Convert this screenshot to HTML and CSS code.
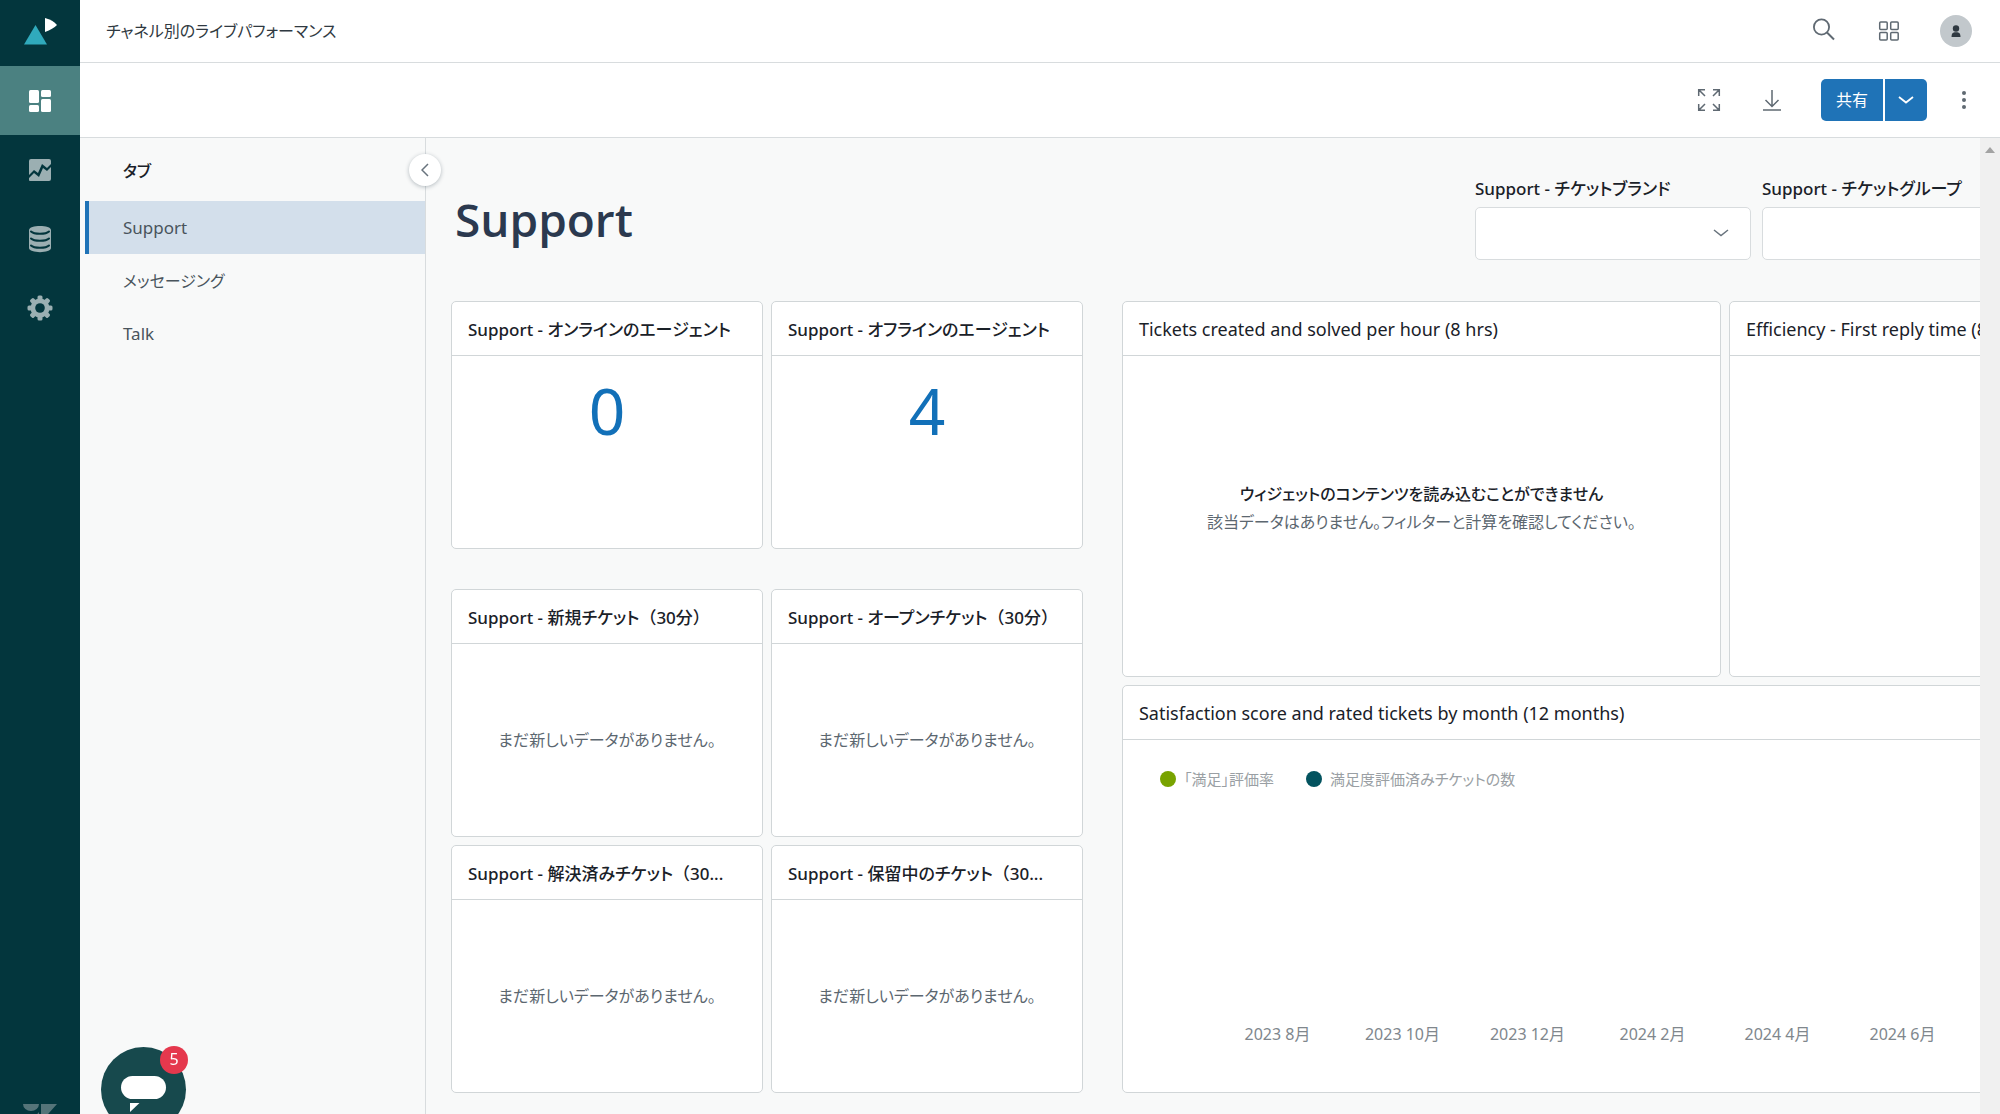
FILE: index.html
```html
<!DOCTYPE html>
<html lang="ja">
<head>
<meta charset="utf-8">
<meta name="viewport" content="width=device-width, initial-scale=1">
<title>チャネル別のライブパフォーマンス</title>
<link rel="stylesheet" href="styles.css">
</head>
<body>
<div class="app">
  <nav class="rail" aria-label="メイン">
    <a class="rail-logo" href="#" aria-label="Explore">
      <svg width="80" height="66" viewBox="0 0 80 66"><path d="M35.500 25L47 44.500H24z" fill="#30aabc"/><path d="M45 18q8 2 12 7-4 4-12 7z" fill="#fff"/></svg>
    </a>
    <a class="rail-item is-active" href="#" aria-label="ダッシュボード">
      <svg width="24" height="24" viewBox="0 0 24 24" fill="currentColor"><rect x="1" y="1" width="10" height="13" rx="1.500"/><rect x="1" y="16" width="10" height="7" rx="1.500"/><rect x="13" y="1" width="10" height="7" rx="1.500"/><rect x="13" y="10" width="10" height="13" rx="1.500"/></svg>
    </a>
    <a class="rail-item" href="#" aria-label="レポート">
      <svg width="24" height="24" viewBox="0 0 24 24" fill="currentColor"><path d="M3 1h18a2 2 0 0 1 2 2v3l-4 4-5-4-4 9-4-3-5 5V3a2 2 0 0 1 2-2z"/><path d="M1 20l5-5 5 4 4-9 4 3 4-4v12a2 2 0 0 1-2 2H2a1 1 0 0 1-1-1z"/></svg>
    </a>
    <a class="rail-item" href="#" aria-label="データセット">
      <svg width="24" height="28" viewBox="0 0 24 28"><path d="M1 5c0-5.500 22-5.500 22 0v18c0 5.500-22 5.500-22 0z" fill="currentColor"/><path d="M3 6.500c3 3 15 3 18 0M3 13.500c3 3 15 3 18 0M3 20.500c3 3 15 3 18 0" fill="none" stroke="#03363d" stroke-width="2" stroke-linecap="round"/></svg>
    </a>
    <a class="rail-item" href="#" aria-label="設定">
      <svg width="26" height="26" viewBox="0 0 26 26"><g fill="currentColor"><rect x="10.500" y="0.500" width="5" height="25" rx="1.500"/><rect x="10.500" y="0.500" width="5" height="25" rx="1.500" transform="rotate(45 13 13)"/><rect x="10.500" y="0.500" width="5" height="25" rx="1.500" transform="rotate(90 13 13)"/><rect x="10.500" y="0.500" width="5" height="25" rx="1.500" transform="rotate(135 13 13)"/><circle cx="13" cy="13" r="9.500"/></g><circle cx="13" cy="13" r="4.800" fill="#03363d"/></svg>
    </a>
    <svg class="rail-brand" width="34" height="28" viewBox="0 0 34 28" fill="currentColor"><path d="M0 0h16a8 7 0 0 1-16 0zM16 8v18H0zM18 0h16L18 18zM18 26a8 7 0 0 1 16 0z"/></svg>
  </nav>

  <div class="page">
    <header class="topbar">
      <h1 class="topbar-title">チャネル別のライブパフォーマンス</h1>
      <div class="topbar-actions">
        <button class="icon-btn" type="button" aria-label="検索"><svg width="26" height="26" viewBox="0 0 26 26" fill="none" stroke="currentColor" stroke-width="1.800"><circle cx="9.500" cy="9" r="7.600"/><path d="M15 14.500L22 21.500" stroke-width="2"/></svg></button>
        <button class="icon-btn" type="button" aria-label="製品"><svg width="22" height="22" viewBox="0 0 22 22" fill="none" stroke="currentColor" stroke-width="1.500"><rect x="1.700" y="2" width="7.500" height="7.500" rx="1"/><rect x="12.700" y="2" width="7.500" height="7.500" rx="1"/><rect x="1.700" y="12.500" width="7.500" height="7.500" rx="1"/><rect x="12.700" y="12.500" width="7.500" height="7.500" rx="1"/></svg></button>
        <button class="avatar" type="button" aria-label="プロフィール"><svg width="32" height="32" viewBox="0 0 32 32" fill="currentColor"><circle cx="16" cy="13.500" r="3.200"/><path d="M11.500 22q0-4.500 3-4.800h3q3 .3 3 4.800z"/></svg></button>
      </div>
    </header>

    <div class="toolbar">
      <button class="icon-btn" type="button" aria-label="全画面"><svg width="24" height="24" viewBox="0 0 24 24" fill="none" stroke="currentColor" stroke-width="1.500"><path d="M1.700 8V1.700H8M2 2l6 6M16 1.700h6.300V8M22 2l-6 6M1.700 16v6.300H8M2 22l6-6M22.300 16v6.300H16M22 22l-6-6"/></svg></button>
      <button class="icon-btn" type="button" aria-label="ダウンロード"><svg width="20" height="24" viewBox="0 0 20 24" fill="none" stroke="currentColor" stroke-width="1.500"><path d="M11 2v16M4.500 12l6.500 6.500 6.500-6.500M2 22h18"/></svg></button>
      <div class="split">
        <button class="split-main" type="button">共有</button>
        <button class="split-toggle" type="button" aria-label="共有オプション"><svg width="16" height="8" viewBox="0 0 16 8" fill="none" stroke="currentColor" stroke-width="1.800"><path d="M1 1l7 5.500L15 1"/></svg></button>
      </div>
      <button class="icon-btn more" type="button" aria-label="その他"><svg width="4" height="20" viewBox="0 0 4 20" fill="currentColor"><circle cx="2" cy="3" r="2"/><circle cx="2" cy="10" r="2"/><circle cx="2" cy="17" r="2"/></svg></button>
    </div>

    <div class="body">
      <aside class="tabs">
        <h2 class="tabs-title">タブ</h2>
        <a class="tab is-active" href="#" lang="en">Support</a>
        <a class="tab" href="#">メッセージング</a>
        <a class="tab" href="#" lang="en">Talk</a>
        <button class="collapse" type="button" aria-label="折りたたむ"><svg width="8" height="14" viewBox="0 0 8 14" fill="none" stroke="currentColor" stroke-width="1.500"><path d="M7 1L1 7l6 6"/></svg></button>
      </aside>

      <main class="view">
        <div class="canvas">
          <div class="canvas-head">
            <h2 class="canvas-title">Support</h2>
            <div class="filters">
              <div class="filter">
                <label for="brand">Support - チケットブランド</label>
                <div class="select-wrap"><select id="brand"><option></option></select><svg class="caret" width="16" height="8" viewBox="0 0 16 8" fill="none" stroke="currentColor" stroke-width="1.500"><path d="M1 1l7 5.500L15 1"/></svg></div>
              </div>
              <div class="filter">
                <label for="group">Support - チケットグループ</label>
                <div class="select-wrap"><select id="group"><option></option></select><svg class="caret" width="16" height="8" viewBox="0 0 16 8" fill="none" stroke="currentColor" stroke-width="1.500"><path d="M1 1l7 5.500L15 1"/></svg></div>
              </div>
            </div>
          </div>

          <div class="widgets">
            <div class="column">
              <div class="pair">
                <section class="card"><h3>Support - オンラインのエージェント</h3><p class="metric">0</p></section>
                <section class="card"><h3>Support - オフラインのエージェント</h3><p class="metric">4</p></section>
              </div>
              <div class="pair">
                <section class="card"><h3>Support - 新規チケット<span class="period">（30分）</span></h3><p class="empty">まだ新しいデータがありません。</p></section>
                <section class="card"><h3>Support - オープンチケット<span class="period">（30分）</span></h3><p class="empty">まだ新しいデータがありません。</p></section>
                <section class="card"><h3>Support - 解決済みチケット<span class="period">（30...</span></h3><p class="empty">まだ新しいデータがありません。</p></section>
                <section class="card"><h3>Support - 保留中のチケット<span class="period">（30...</span></h3><p class="empty">まだ新しいデータがありません。</p></section>
              </div>
            </div>
            <div class="column charts">
              <div class="pair">
                <section class="card card-chart">
                  <h3 lang="en">Tickets created and solved per hour (8 hrs)</h3>
                  <div class="notice"><p class="notice-title">ウィジェットのコンテンツを読み込むことができません</p><p>該当データはありません。フィルターと計算を確認してください。</p></div>
                </section>
                <section class="card card-chart"><h3 lang="en">Efficiency - First reply time (8 hrs)</h3></section>
              </div>
              <section class="card card-wide">
                <h3 lang="en">Satisfaction score and rated tickets by month (12 months)</h3>
                <ul class="legend">
                  <li><span class="dot dot-green"></span>「満足」評価率</li>
                  <li><span class="dot dot-teal"></span>満足度評価済みチケットの数</li>
                </ul>
                <ol class="axis"><li>2023 8月</li><li>2023 10月</li><li>2023 12月</li><li>2024 2月</li><li>2024 4月</li><li>2024 6月</li></ol>
              </section>
            </div>
          </div>
        </div>
      </main>
      <div class="scroll-track" aria-hidden="true"><svg width="10" height="6" viewBox="0 0 10 6"><path d="M5 0l5 6H0z" fill="#a3a3a3"/></svg></div>
    </div>
  </div>

  <button class="chat" type="button" aria-label="チャット">
    <svg width="85" height="85" viewBox="0 0 85 85" fill="#fff"><rect x="20" y="29" width="45" height="23" rx="11.500"/><path d="M29 56h9.500L29 65z"/></svg>
    <span class="badge">5</span>
  </button>
</div>
</body>
</html>
```

FILE: styles.css
```css
* {
  box-sizing: border-box;
}

body {
  margin: 0;
  font-family: "Noto Sans", "Noto Sans CJK JP", sans-serif;
  font-feature-settings: "palt";
  font-size: 16px;
  line-height: 28px;
  color: #2f3941;
  background: #f8f9f9;
}

h1, h2, h3, p, ul, ol {
  margin: 0;
  padding: 0;
  font-weight: 400;
  list-style: none;
}

a {
  color: inherit;
  text-decoration: none;
}

button {
  display: flex;
  align-items: center;
  justify-content: center;
  padding: 0;
  border: 0;
  background: none;
  font: inherit;
  font-feature-settings: inherit;
  cursor: pointer;
}

svg {
  display: block;
}

.app {
  display: flex;
  height: 100vh;
  overflow: hidden;
}

/* Left navigation rail */
.rail {
  display: flex;
  flex: none;
  flex-direction: column;
  width: 80px;
  height: 100%;
  background: #03363d;
  color: #9bafb2;
}

.rail-item {
  display: flex;
  flex: none;
  align-items: center;
  justify-content: center;
  height: 69px;
}

.rail-item.is-active {
  background: #4b8181;
  color: #fff;
}

.rail-logo {
  flex: none;
}

.rail-brand {
  flex: none;
  align-self: center;
  margin-top: auto;
  margin-bottom: -18px;
  color: #557479;
}

.page {
  display: flex;
  flex: 1;
  flex-direction: column;
  min-width: 0;
}

/* Top bar and toolbar */
.topbar,
.toolbar {
  display: flex;
  flex: none;
  align-items: center;
  border-bottom: 1px solid #d8dcde;
  background: #fff;
}

.topbar {
  justify-content: space-between;
  height: 63px;
  padding: 0 28px 0 26px;
}

.topbar-title {
  font-size: 16px;
  color: #2f3941;
}

.topbar-actions {
  display: flex;
  align-items: center;
  gap: 40px;
}

.avatar {
  width: 32px;
  height: 32px;
  border-radius: 50%;
  background: #c2c8cc;
  color: #2f3941;
}

.icon-btn {
  color: #5f6972;
}

.toolbar {
  justify-content: flex-end;
  gap: 40px;
  height: 75px;
  padding-right: 34px;
}

.split {
  display: flex;
  gap: 2px;
  height: 42px;
}

.split-main,
.split-toggle {
  background: #1f73b7;
  color: #fff;
}

.split-main {
  width: 62px;
  border-radius: 5px 0 0 5px;
}

.split-toggle {
  width: 42px;
  border-radius: 0 5px 5px 0;
}

.more {
  margin-left: -5px;
}

.body {
  display: flex;
  flex: 1;
  min-height: 0;
}

/* Tab list */
.tabs {
  position: relative;
  flex: none;
  width: 346px;
  padding: 10px 0 0 5px;
  border-right: 1px solid #d8dcde;
}

.tabs-title,
.tab {
  display: flex;
  align-items: center;
  height: 53px;
  padding-left: 34px;
  border-left: 4px solid transparent;
  font-size: 16px;
}

.tabs-title {
  padding-bottom: 8px;
  font-weight: 500;
  color: #1a2128;
}

.tab {
  color: #49545c;
}

.tab:lang(en) {
  font-size: 17px;
}

.tab.is-active {
  border-left-color: #1f73b7;
  background: #d3dfeb;
}

.collapse {
  position: absolute;
  top: 16px;
  right: -16px;
  z-index: 1;
  width: 32px;
  height: 32px;
  border-radius: 50%;
  background: #fff;
  color: #68737d;
  box-shadow: 0 1px 4px rgba(23, 43, 60, 0.3);
}

/* Dashboard canvas, wider than the viewport it sits in */
.view {
  flex: 1;
  min-width: 0;
  overflow: hidden;
}

.canvas {
  width: 124%;
  padding: 37px 25px 22px;
}

.canvas-head {
  display: flex;
  align-items: flex-start;
  height: 126px;
}

.canvas-title {
  flex: 1;
  padding: 12px 4px;
  font-family: "Open Sans", sans-serif;
  font-size: 46px;
  line-height: 64px;
  font-weight: 600;
  color: #2b394f;
}

.filters {
  display: flex;
  flex: none;
  gap: 11px;
  width: 853px;
}

.filter {
  width: 276px;
}

.filter label {
  display: block;
  height: 32px;
  font-size: 17px;
  font-weight: 500;
  white-space: nowrap;
  color: #1a2128;
}

.select-wrap {
  position: relative;
}

.filter select {
  width: 100%;
  height: 53px;
  border: 1px solid #d8dcde;
  border-radius: 5px;
  appearance: none;
  background: #fff;
  font: inherit;
}

.caret {
  position: absolute;
  top: 22px;
  right: 22px;
  color: #68737d;
  pointer-events: none;
}

.widgets {
  display: grid;
  grid-template-columns: 632fr 1206fr;
  gap: 39px;
}

.column {
  display: flex;
  flex-direction: column;
  gap: 40px;
  min-width: 0;
}

.charts {
  gap: 8px;
}

.pair {
  display: grid;
  grid-template-columns: minmax(0, 1fr) minmax(0, 1fr);
  gap: 8px;
}

.card {
  display: flex;
  flex-direction: column;
  min-width: 0;
  min-height: 248px;
  border: 1px solid #d1d6d8;
  border-radius: 5px;
  background: #fff;
}

.card h3 {
  flex: none;
  overflow: hidden;
  padding: 14px 16px 12px;
  border-bottom: 1px solid #d1d6d8;
  font-size: 17px;
  line-height: 27px;
  font-weight: 500;
  text-overflow: ellipsis;
  white-space: nowrap;
  color: #1a2128;
}

.card h3:lang(en) {
  font-size: 18px;
  font-weight: 400;
}

/* Full-width brackets keep their own spacing */
.period {
  font-feature-settings: normal;
}

.metric {
  padding-top: 15px;
  font-size: 64px;
  line-height: 80px;
  text-align: center;
  color: #1270b8;
}

.empty,
.notice {
  display: flex;
  flex: 1;
  flex-direction: column;
  align-items: center;
  justify-content: center;
  color: #5c6770;
}

.notice {
  padding-bottom: 16px;
}

.card-chart {
  min-height: 376px;
}

.notice-title {
  font-weight: 500;
  color: #1a2128;
}

.card-wide {
  min-height: 408px;
}

.legend {
  display: flex;
  gap: 32px;
  padding: 25px 37px;
  font-size: 15px;
  color: #9a9fa4;
}

.legend li {
  display: flex;
  align-items: center;
  gap: 8px;
}

.dot {
  width: 16px;
  height: 16px;
  border-radius: 50%;
}

.dot-green {
  background: #78a300;
}

.dot-teal {
  background: #03535f;
}

.axis {
  display: grid;
  grid-template-columns: repeat(6, 125px);
  margin-top: auto;
  padding: 0 0 44px 92px;
  text-align: center;
  color: #80878d;
}

.scroll-track {
  display: flex;
  flex: none;
  justify-content: center;
  width: 20px;
  padding-top: 9px;
  background: #f0f0f0;
}

/* Floating chat launcher */
.chat {
  position: fixed;
  bottom: -18px;
  left: 101px;
  z-index: 2;
  border-radius: 50%;
  background: #17494d;
}

.badge {
  position: absolute;
  top: -1px;
  right: -2px;
  width: 28px;
  height: 28px;
  border-radius: 50%;
  background: #e5384d;
  line-height: 27px;
  color: #fff;
}
```
